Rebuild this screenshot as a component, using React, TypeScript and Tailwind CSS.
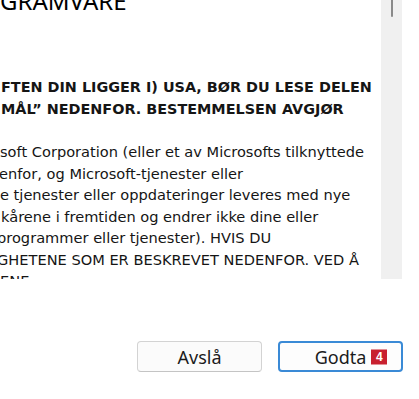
import React from 'react'

const bodyLines = [
  { text: 'soft Corporation (eller et av Microsofts tilknyttede', shift: 0 },
  { text: 'enfor, og Microsoft-tjenester eller', shift: -1 },
  { text: 'e tjenester eller oppdateringer leveres med nye', shift: 0 },
  { text: 'kårene i fremtiden og endrer ikke dine eller', shift: 1 },
  { text: 'programmer eller tjenester). HVIS DU', shift: -3 },
  { text: 'GHETENE SOM ER BESKREVET NEDENFOR. VED Å', shift: -3 },
  { text: 'ENE', shift: 0 },
]

const App: React.FC = () => {
  return (
    <div className="w-[419px] h-[399px] bg-white flex flex-col overflow-hidden">
      <div className="flex h-[279px] shrink-0">
        {/* license text, scrolled so the start of each line is hidden */}
        <div className="w-[381px] overflow-hidden text-[#151515] font-['DejaVu_Sans',sans-serif]">
          <div className="mt-[-15px] leading-[32px] text-[24px] text-black whitespace-nowrap font-['Noto_Sans',sans-serif]">
            GRAMVARE
          </div>

          <div className="mt-[60px] text-[14.4px] leading-[21.5px] font-bold whitespace-nowrap pl-[1px]">
            <div>FTEN DIN LIGGER I) USA, BØR DU LESE DELEN</div>
            <div>MÅL” NEDENFOR. BESTEMMELSEN AVGJØR</div>
          </div>

          <div className="mt-[21px] text-[14.6px] leading-[21.5px] whitespace-nowrap">
            {bodyLines.map((line, i) => (
              <div key={i} style={{ marginLeft: line.shift }}>
                {line.text}
              </div>
            ))}
          </div>
        </div>

        {/* scrollbar */}
        <div className="w-[21px] bg-[#f0f0f0] flex justify-center">
          <div className="w-[2px] h-[17px] ml-[1px] rounded-b-full bg-[#8a8a8a]" />
        </div>
        <div className="flex-1 bg-white" />
      </div>

      <div className="flex-1 flex justify-end items-start gap-[16px] pt-[62px] pr-[16px] font-['Noto_Sans',sans-serif]">
        <button className="w-[125px] h-[31px] rounded-[4px] border border-[#d3d3d3] border-b-[#c4c4c4] bg-[#fbfbfb] text-[18px] leading-none text-[#1b1b1b] flex items-center justify-center">
          Avslå
        </button>
        <button className="w-[125px] h-[31px] rounded-[4px] border-2 border-[#3a8ad6] bg-[#fdfdfd] text-[18px] leading-none text-[#1b1b1b] flex items-center justify-center">
          <span className="relative">
            Godta
            <span className="absolute left-full top-1/2 -translate-y-1/2 ml-[5px] w-[16px] h-[15px] bg-[#c8202f] text-white text-[12px] font-bold leading-[15px] text-center font-['Liberation_Sans',sans-serif]">
              4
            </span>
          </span>
        </button>
      </div>
    </div>
  )
}

export default App
